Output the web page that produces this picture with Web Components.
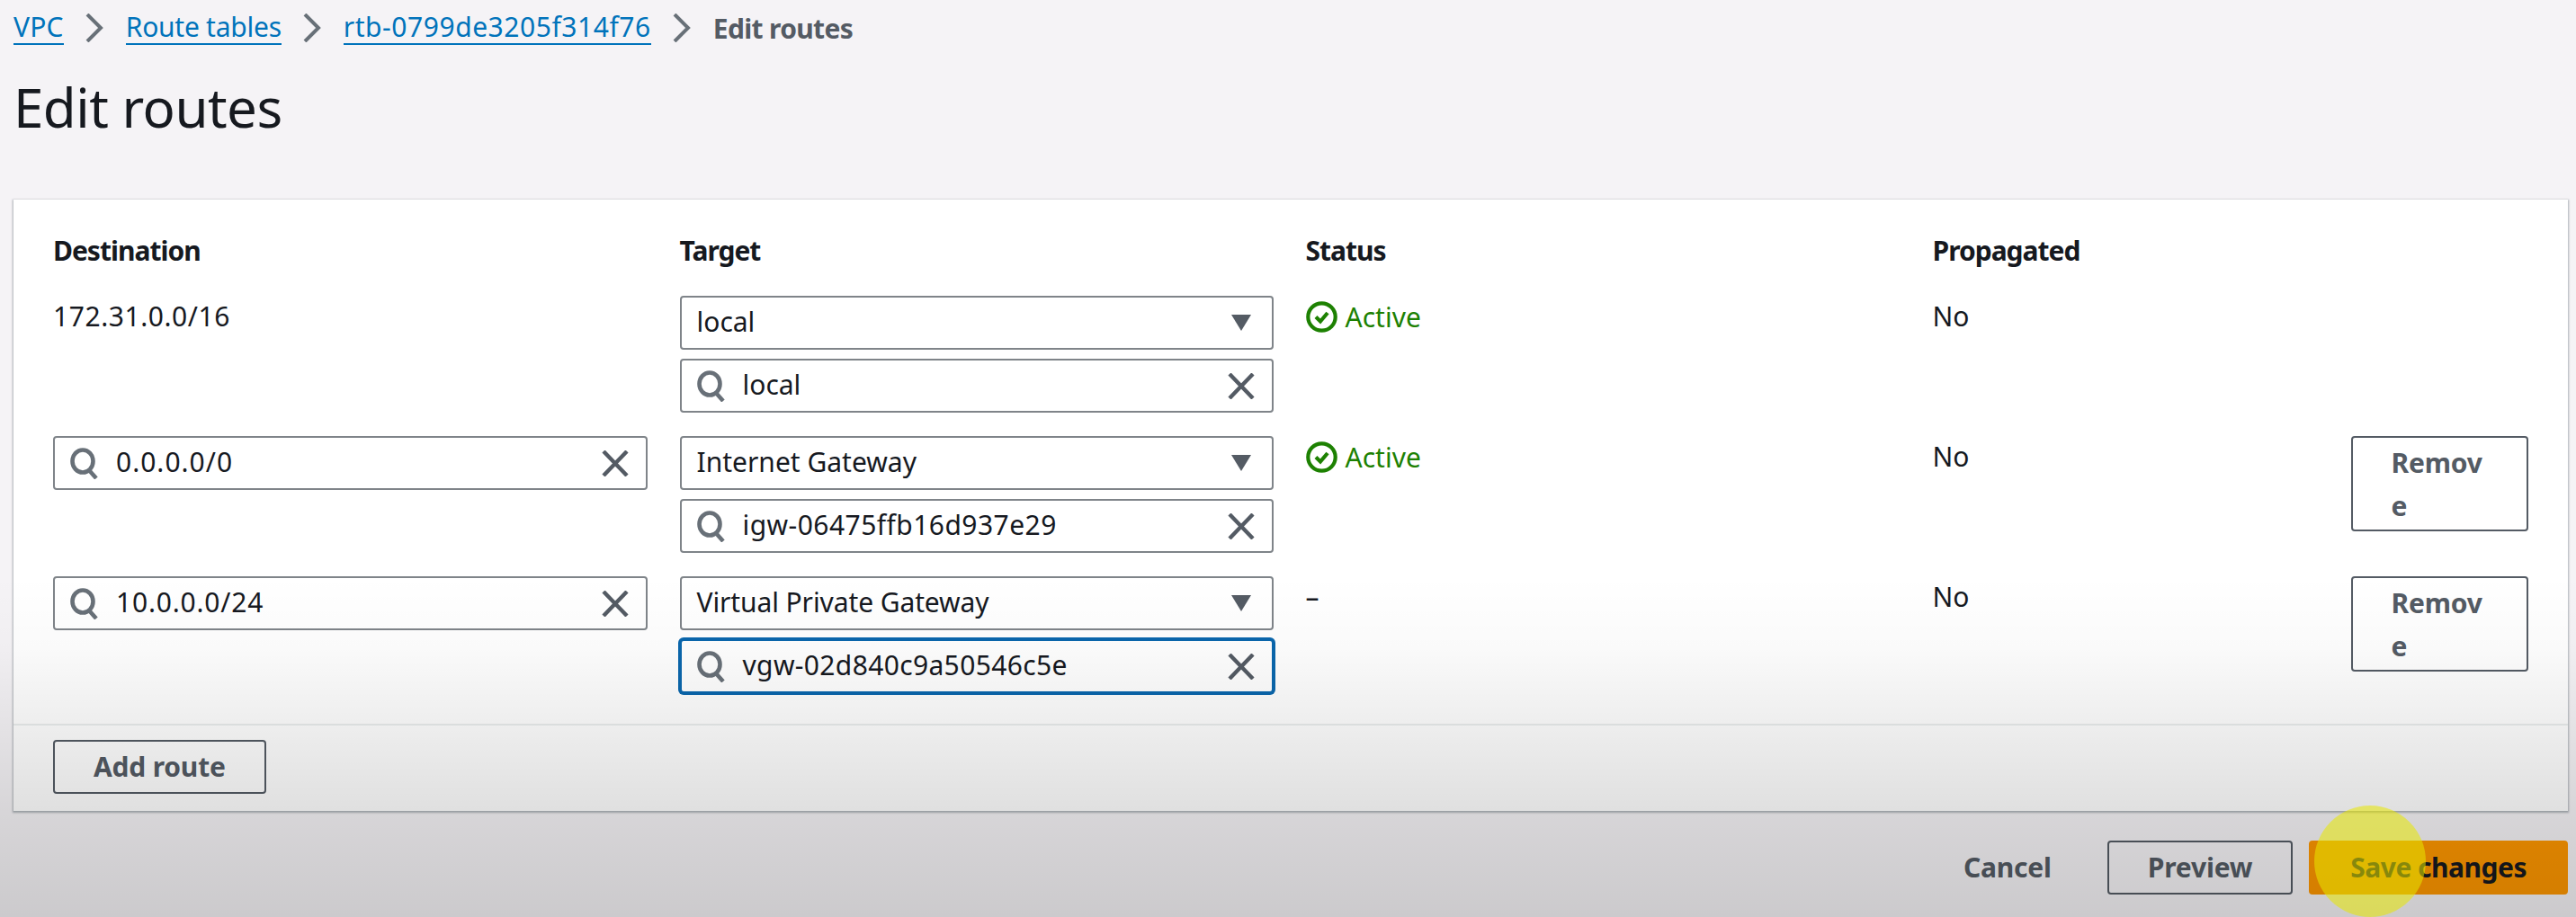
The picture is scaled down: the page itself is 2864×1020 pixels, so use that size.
<!DOCTYPE html>
<html lang="en">
<head>
<meta charset="utf-8">
<title>Edit routes</title>
<style>
  html, body {
    margin: 0;
    height: 1020px;
    overflow: hidden;
    background: #f5f3f6;
    color: #16191f;
    font-family: "Noto Sans", "Liberation Sans", sans-serif;
    font-size: 30px;
  }
</style>
</head>
<body>
<route-page>
  <crumb-trail slot="crumbs">
    <crumb-item href="#" style="letter-spacing: 0.2px">VPC</crumb-item>
    <crumb-item href="#" style="letter-spacing: -0.25px">Route tables</crumb-item>
    <crumb-item href="#" style="letter-spacing: 0.55px">rtb-0799de3205f314f76</crumb-item>
    <crumb-item>Edit routes</crumb-item>
  </crumb-trail>

  <route-card slot="card">
    <route-row header>
      <span>Destination</span>
      <span>Target</span>
      <span>Status</span>
      <span>Propagated</span>
    </route-row>

    <route-row>
      <plain-cell style="letter-spacing: 0.55px">172.31.0.0/16</plain-cell>
      <target-cell>
        <select-box>local</select-box>
        <search-box>local</search-box>
      </target-cell>
      <plain-cell><status-ok>Active</status-ok></plain-cell>
      <plain-cell>No</plain-cell>
    </route-row>

    <route-row>
      <search-box style="letter-spacing: 1px">0.0.0.0/0</search-box>
      <target-cell>
        <select-box>Internet Gateway</select-box>
        <search-box style="letter-spacing: 0.45px">igw-06475ffb16d937e29</search-box>
      </target-cell>
      <plain-cell><status-ok>Active</status-ok></plain-cell>
      <propagated-cell>No<aws-button slot="action" wrap>Remove</aws-button></propagated-cell>
    </route-row>

    <route-row>
      <search-box style="letter-spacing: 0.8px">10.0.0.0/24</search-box>
      <target-cell>
        <select-box style="letter-spacing: -0.1px">Virtual Private Gateway</select-box>
        <search-box focused style="letter-spacing: 0.35px">vgw-02d840c9a50546c5e</search-box>
      </target-cell>
      <plain-cell>–</plain-cell>
      <propagated-cell>No<aws-button slot="action" wrap>Remove</aws-button></propagated-cell>
    </route-row>

    <aws-button slot="footer">Add route</aws-button>
  </route-card>

  <action-bar slot="actions">
    <aws-button variant="link">Cancel</aws-button>
    <aws-button>Preview</aws-button>
    <aws-button variant="primary">Save changes</aws-button>
  </action-bar>
</route-page>

<video-shade></video-shade>
<cursor-spot></cursor-spot>

<script>
const SEARCH_ICON = /* html */`
  <svg width="32" height="35" viewBox="0 0 32 35" fill="none" stroke="#687078" stroke-width="4.6">
    <ellipse cx="14" cy="15" rx="11.5" ry="12.5"/>
    <path d="M21 25l8 9"/>
  </svg>`;

const CLEAR_ICON = /* html */`
  <svg width="30" height="29" viewBox="0 0 30 29" fill="none" stroke="#545b64" stroke-width="4.4">
    <path d="M2 1l26 27M28 1L2 28"/>
  </svg>`;

const CARET_ICON = /* html */`
  <svg width="24" height="18" viewBox="0 0 24 18" fill="#545b64">
    <path d="M1 0h22L12 18z"/>
  </svg>`;

const CHECK_ICON = /* html */`
  <svg width="35" height="35" viewBox="0 0 35 35" fill="none" stroke="#1d8102" stroke-width="4.2">
    <circle cx="17.500" cy="17.500" r="15.200"/>
    <path d="M11 17.500l5 5 8-9.500"/>
  </svg>`;

class RoutePage extends HTMLElement {
  constructor() {
    super();
    this.attachShadow({ mode: "open" });
  }

  connectedCallback() {
    this.shadowRoot.innerHTML = /* html */`
    <style>
      :host {
        display: block;
        padding: 0 9px 0 15px;
      }

      h1 {
        margin: 0;
        height: 156px;
        box-sizing: border-box;
        padding-top: 13px;
        font-size: 60px;
        font-weight: 400;
        line-height: 80px;
        letter-spacing: -0.5px;
      }

      .crumbs {
        height: 66px;
      }

      .actions {
        margin-top: 33px;
      }
    </style>
    <div class="crumbs"><slot name="crumbs"></slot></div>
    <h1>Edit routes</h1>
    <div class="card"><slot name="card"></slot></div>
    <div class="actions"><slot name="actions"></slot></div>`;
  }
}

class CrumbTrail extends HTMLElement {
  constructor() {
    super();
    this.attachShadow({ mode: "open" });
  }

  connectedCallback() {
    this.shadowRoot.innerHTML = /* html */`
    <style>
      :host {
        display: flex;
        align-items: center;
        height: 62px;
      }
    </style>
    <slot></slot>`;
  }
}

class CrumbItem extends HTMLElement {
  constructor() {
    super();
    this.attachShadow({ mode: "open" });
  }

  connectedCallback() {
    const last = !this.hasAttribute("href");
    const chevron = /* html */`
      <svg width="20" height="32" viewBox="0 0 20 32" fill="none" stroke="#687078" stroke-width="4">
        <path d="M2 1l15 15L2 31"/>
      </svg>`;
    this.shadowRoot.innerHTML = /* html */`
    <style>
      :host {
        display: flex;
        align-items: center;
        gap: 24px;
        margin-right: 25px;
      }

      a {
        color: #0073bb;
        text-decoration: none;
        border-bottom: 2px solid #0073bb;
        line-height: 36px;
      }

      span {
        color: #545b64;
        font-weight: 700;
        letter-spacing: -0.66px;
      }
    </style>
    ${last
      ? `<span><slot></slot></span>`
      : `<a href="${this.getAttribute("href")}"><slot></slot></a>${chevron}`}`;
  }
}

class RouteCard extends HTMLElement {
  constructor() {
    super();
    this.attachShadow({ mode: "open" });
  }

  connectedCallback() {
    this.shadowRoot.innerHTML = /* html */`
    <style>
      :host {
        display: block;
        background: #fff;
        box-shadow: 0 1px 2px 1px rgba(0, 28, 36, 0.3);
        height: 680px;
        box-sizing: border-box;
      }

      .rows {
        height: 585px;
        box-sizing: border-box;
        padding: 40px 45px 0 44px;
        border-bottom: 2px solid #eaeded;
      }

      .footer {
        display: flex;
        padding: 16px 44px;
      }
    </style>
    <div class="rows"><slot></slot></div>
    <div class="footer"><slot name="footer"></slot></div>`;
  }
}

class RouteRow extends HTMLElement {
  constructor() {
    super();
    this.attachShadow({ mode: "open" });
  }

  connectedCallback() {
    this.shadowRoot.innerHTML = /* html */`
    <style>
      :host {
        display: grid;
        grid-template-columns: 661px 660.5px 661.5px 662px;
        column-gap: 35.5px;
        margin-bottom: 26px;
      }

      :host([header]) {
        font-weight: 700;
        letter-spacing: -1px;
        line-height: 34px;
        margin-bottom: 33px;
      }
    </style>
    <slot></slot>`;
  }
}

class PlainCell extends HTMLElement {
  constructor() {
    super();
    this.attachShadow({ mode: "open" });
  }

  connectedCallback() {
    this.shadowRoot.innerHTML = /* html */`
    <style>
      :host {
        display: block;
        line-height: 34px;
        padding-top: 6px;
      }
    </style>
    <slot></slot>`;
  }
}

class PropagatedCell extends HTMLElement {
  constructor() {
    super();
    this.attachShadow({ mode: "open" });
  }

  connectedCallback() {
    this.shadowRoot.innerHTML = /* html */`
    <style>
      :host {
        display: flex;
        justify-content: space-between;
        align-items: flex-start;
        line-height: 34px;
      }

      .label {
        padding-top: 6px;
      }
    </style>
    <div class="label"><slot></slot></div>
    <slot name="action"></slot>`;
  }
}

class TargetCell extends HTMLElement {
  constructor() {
    super();
    this.attachShadow({ mode: "open" });
  }

  connectedCallback() {
    this.shadowRoot.innerHTML = /* html */`
    <style>
      :host {
        display: flex;
        flex-direction: column;
        gap: 10px;
      }
    </style>
    <slot></slot>`;
  }
}

class SelectBox extends HTMLElement {
  constructor() {
    super();
    this.attachShadow({ mode: "open" });
  }

  connectedCallback() {
    this.shadowRoot.innerHTML = /* html */`
    <style>
      :host {
        display: flex;
        align-items: center;
        justify-content: space-between;
        box-sizing: border-box;
        height: 60px;
        padding: 0 22px 0 17px;
        border: 2px solid #7f8489;
        border-radius: 4px;
        background: #fff;
      }

      span {
        padding-bottom: 3px;
      }

      svg {
        display: block;
      }
    </style>
    <span><slot></slot></span>
    ${CARET_ICON}`;
  }
}

class SearchBox extends HTMLElement {
  constructor() {
    super();
    this.attachShadow({ mode: "open" });
  }

  connectedCallback() {
    this.shadowRoot.innerHTML = /* html */`
    <style>
      :host {
        display: flex;
        align-items: center;
        box-sizing: border-box;
        height: 60px;
        padding: 0 19px 0 17px;
        border: 2px solid #7f8489;
        border-radius: 4px;
        background: #fff;
      }

      :host([focused]) {
        border-color: #0a67ad;
        box-shadow: 0 0 0 2px #0a67ad;
      }

      svg {
        display: block;
        flex: none;
      }

      .value {
        flex: 1;
        margin-left: 19px;
        padding-bottom: 3px;
      }
    </style>
    ${SEARCH_ICON}
    <span class="value"><slot></slot></span>
    ${CLEAR_ICON}`;
  }
}

class StatusOk extends HTMLElement {
  constructor() {
    super();
    this.attachShadow({ mode: "open" });
  }

  connectedCallback() {
    this.shadowRoot.innerHTML = /* html */`
    <style>
      :host {
        display: flex;
        align-items: center;
        gap: 9px;
        color: #1d8102;
      }

      svg {
        display: block;
      }
    </style>
    ${CHECK_ICON}
    <span><slot></slot></span>`;
  }
}

class AwsButton extends HTMLElement {
  constructor() {
    super();
    this.attachShadow({ mode: "open" });
  }

  connectedCallback() {
    this.shadowRoot.innerHTML = /* html */`
    <style>
      :host {
        display: block;
        box-sizing: border-box;
        height: 60px;
        padding: 0 43px;
        border: 2px solid #545b64;
        border-radius: 4px;
        color: #545b64;
        font-weight: 700;
        letter-spacing: -0.2px;
        line-height: 56px;
        white-space: nowrap;
      }

      :host([wrap]) {
        width: 197px;
        height: 106px;
        line-height: 48px;
        padding: 4px 43px;
        white-space: normal;
        word-break: break-all;
      }

      :host([variant="link"]) {
        border-color: transparent;
        padding-right: 42px;
      }

      :host([variant="primary"]) {
        background: #fd9600;
        border-color: #fd9600;
        color: #16191f;
        padding: 0 44px;
        letter-spacing: -0.5px;
      }
    </style>
    <slot></slot>`;
  }
}

class ActionBar extends HTMLElement {
  constructor() {
    super();
    this.attachShadow({ mode: "open" });
  }

  connectedCallback() {
    this.shadowRoot.innerHTML = /* html */`
    <style>
      :host {
        display: flex;
        justify-content: flex-end;
        gap: 18px;
      }
    </style>
    <slot></slot>`;
  }
}

// the recording darkens towards the bottom, over everything on the page
class VideoShade extends HTMLElement {
  constructor() {
    super();
    this.attachShadow({ mode: "open" });
  }

  connectedCallback() {
    this.shadowRoot.innerHTML = /* html */`
    <style>
      :host {
        position: absolute;
        inset: 0;
        height: 1020px;
        pointer-events: none;
        background: linear-gradient(
          to bottom,
          rgba(0, 0, 0, 0) 640px,
          rgba(0, 0, 0, 0.02) 720px,
          rgba(0, 0, 0, 0.07) 810px,
          rgba(0, 0, 0, 0.12) 900px,
          rgba(0, 0, 0, 0.17) 1020px
        );
      }
    </style>`;
  }
}

class CursorSpot extends HTMLElement {
  constructor() {
    super();
    this.attachShadow({ mode: "open" });
  }

  connectedCallback() {
    this.shadowRoot.innerHTML = /* html */`
    <style>
      :host {
        position: absolute;
        left: 2573px;
        top: 896px;
        width: 124px;
        height: 124px;
        border-radius: 50%;
        background: rgba(232, 232, 0, 0.55);
      }
    </style>`;
  }
}

customElements.define("route-page", RoutePage);
customElements.define("crumb-trail", CrumbTrail);
customElements.define("crumb-item", CrumbItem);
customElements.define("route-card", RouteCard);
customElements.define("route-row", RouteRow);
customElements.define("plain-cell", PlainCell);
customElements.define("propagated-cell", PropagatedCell);
customElements.define("target-cell", TargetCell);
customElements.define("select-box", SelectBox);
customElements.define("search-box", SearchBox);
customElements.define("status-ok", StatusOk);
customElements.define("aws-button", AwsButton);
customElements.define("action-bar", ActionBar);
customElements.define("video-shade", VideoShade);
customElements.define("cursor-spot", CursorSpot);
</script>
</body>
</html>
